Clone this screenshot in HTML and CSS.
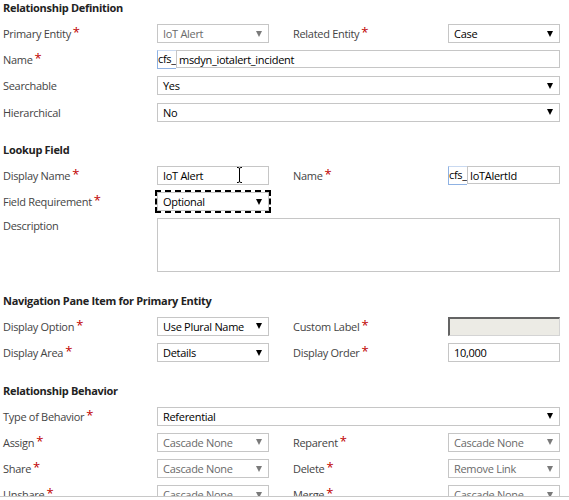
FILE: index.html
```html
<!DOCTYPE html>
<html>
<head>
<meta charset="utf-8">
<link rel="stylesheet" href="styles.css">
</head>
<body>
<div class="page">
  <section class="sec">
    <h2 class="hd">Relationship Definition</h2>
    <div class="grid">
      <div class="lbl">Primary Entity<span class="req">*</span></div>
      <div class="sel dis"><span>IoT Alert</span><i class="arr"></i></div>
      <div class="lbl c4">Related Entity<span class="req">*</span></div>
      <div class="sel"><span>Case</span><i class="arr"></i></div>

      <div class="lbl">Name<span class="req">*</span></div>
      <div class="pref wide"><span class="pfx">cfs_</span><span class="inp grow">msdyn_iotalert_incident</span></div>

      <div class="lbl">Searchable</div>
      <div class="sel wide"><span>Yes</span><i class="arr"></i></div>

      <div class="lbl">Hierarchical</div>
      <div class="sel wide"><span>No</span><i class="arr"></i></div>
    </div>
  </section>

  <section class="sec">
    <h2 class="hd">Lookup Field</h2>
    <div class="grid">
      <div class="lbl">Display Name<span class="req">*</span></div>
      <div class="inp cursorhost">IoT Alert<svg class="ibeam" width="7" height="18" viewBox="0 0 7 18"><path d="M1 1.5h1.2c.8 0 1.3.5 1.3 1.3v12.4c0 .8-.5 1.3-1.3 1.3H1M6 1.5H4.8c-.8 0-1.3.5-1.3 1.3M6 16.5H4.8c-.8 0-1.3-.5-1.3-1.3" stroke="#000" stroke-width="1" fill="none"/></svg></div>
      <div class="lbl c4">Name<span class="req">*</span></div>
      <div class="pref"><span class="pfx">cfs_</span><span class="inp grow">IoTAlertId</span></div>

      <div class="lbl">Field Requirement<span class="req">*</span></div>
      <div class="sel focus"><span>Optional</span><i class="arr"></i></div>

      <div class="lbl top">Description</div>
      <div class="inp wide area"></div>
    </div>
  </section>

  <section class="sec">
    <h2 class="hd">Navigation Pane Item for Primary Entity</h2>
    <div class="grid">
      <div class="lbl">Display Option<span class="req">*</span></div>
      <div class="sel"><span>Use Plural Name</span><i class="arr"></i></div>
      <div class="lbl c4">Custom Label<span class="req">*</span></div>
      <div class="inset"></div>

      <div class="lbl">Display Area<span class="req">*</span></div>
      <div class="sel"><span>Details</span><i class="arr"></i></div>
      <div class="lbl c4">Display Order<span class="req">*</span></div>
      <div class="inp">10,000</div>
    </div>
  </section>

  <section class="sec">
    <h2 class="hd">Relationship Behavior</h2>
    <div class="grid">
      <div class="lbl">Type of Behavior<span class="req">*</span></div>
      <div class="sel wide"><span>Referential</span><i class="arr"></i></div>

      <div class="lbl">Assign<span class="req">*</span></div>
      <div class="sel dis"><span>Cascade None</span><i class="arr"></i></div>
      <div class="lbl c4">Reparent<span class="req">*</span></div>
      <div class="sel dis"><span>Cascade None</span><i class="arr"></i></div>

      <div class="lbl">Share<span class="req">*</span></div>
      <div class="sel dis"><span>Cascade None</span><i class="arr"></i></div>
      <div class="lbl c4">Delete<span class="req">*</span></div>
      <div class="sel dis"><span>Remove Link</span><i class="arr"></i></div>

      <div class="lbl">Unshare<span class="req">*</span></div>
      <div class="sel dis"><span>Cascade None</span><i class="arr"></i></div>
      <div class="lbl c4">Merge<span class="req">*</span></div>
      <div class="sel dis"><span>Cascade None</span><i class="arr"></i></div>
    </div>
  </section>
</div>
</body>
</html>
```

FILE: styles.css
```css
html, body {
  margin: 0;
  padding: 0;
  background: #fff;
}
body {
  font-family: "Open Sans", "Noto Sans", sans-serif;
  font-size: 11px;
  letter-spacing: -0.3px;
  color: #444;
}
.page {
  height: 497px;
  overflow: hidden;
  border-bottom: 1px solid #c8c8c8;
  padding-left: 3px;
  box-sizing: border-box;
}
.sec + .sec {
  margin-top: 20.5px;
}
.hd {
  margin: 0 0 8px 0;
  font-size: 11px;
  line-height: 16px;
  font-weight: 700;
  color: #222;
}
.grid {
  display: grid;
  grid-template-columns: 154px 112px 24px 155px 112px;
  row-gap: 7.2px;
  align-items: center;
}
.lbl {
  grid-column: 1;
  white-space: nowrap;
  height: 19px;
  line-height: 19px;
  color: #444;
}
.lbl.c4 {
  grid-column: 4;
}
.lbl.top {
  align-self: start;
  line-height: 16px;
}
.req {
  color: #c00000;
  font-size: 13px;
  line-height: 0;
  margin-left: 2px;
  vertical-align: 1px;
}
.sel, .inp, .inset {
  box-sizing: border-box;
  height: 19px;
  border: 1px solid #c6c6c6;
  background: #fff;
  color: #000;
  line-height: 17px;
  padding: 0 6px 0 5px;
  white-space: nowrap;
}
.sel {
  display: flex;
  align-items: center;
  justify-content: space-between;
}
.arr {
  display: block;
  width: 0;
  height: 0;
  border-left: 3.5px solid transparent;
  border-right: 3.5px solid transparent;
  border-top: 6px solid #000;
}
.sel.dis {
  color: #6a6a6a;
}
.sel.dis .arr {
  border-top-color: #7a7a7a;
}
.wide {
  grid-column: 2 / 6;
}
.focus {
  outline: 2px dashed #000;
  outline-offset: 0;
}
.pref {
  display: flex;
  height: 19px;
  align-items: stretch;
}
.pfx {
  box-sizing: border-box;
  width: 19px;
  height: 19px;
  border: 1px solid #8fb2e3;
  border-top-color: #c9d9f0;
  border-right: none;
  color: #000;
  line-height: 16px;
  padding-left: 0;
}
.inp.grow {
  flex: 1;
  height: 18px;
  padding-left: 2px;
}
.cursorhost {
  position: relative;
}
.ibeam {
  position: absolute;
  left: 78px;
  top: -1px;
}
.area {
  height: 54px;
}
.inset {
  background: #ecebe5;
  border-top: 2px solid #646464;
  border-left: 2px solid #646464;
  border-right: 1px solid #d4d4d4;
  border-bottom: 1px solid #d4d4d4;
}
```
